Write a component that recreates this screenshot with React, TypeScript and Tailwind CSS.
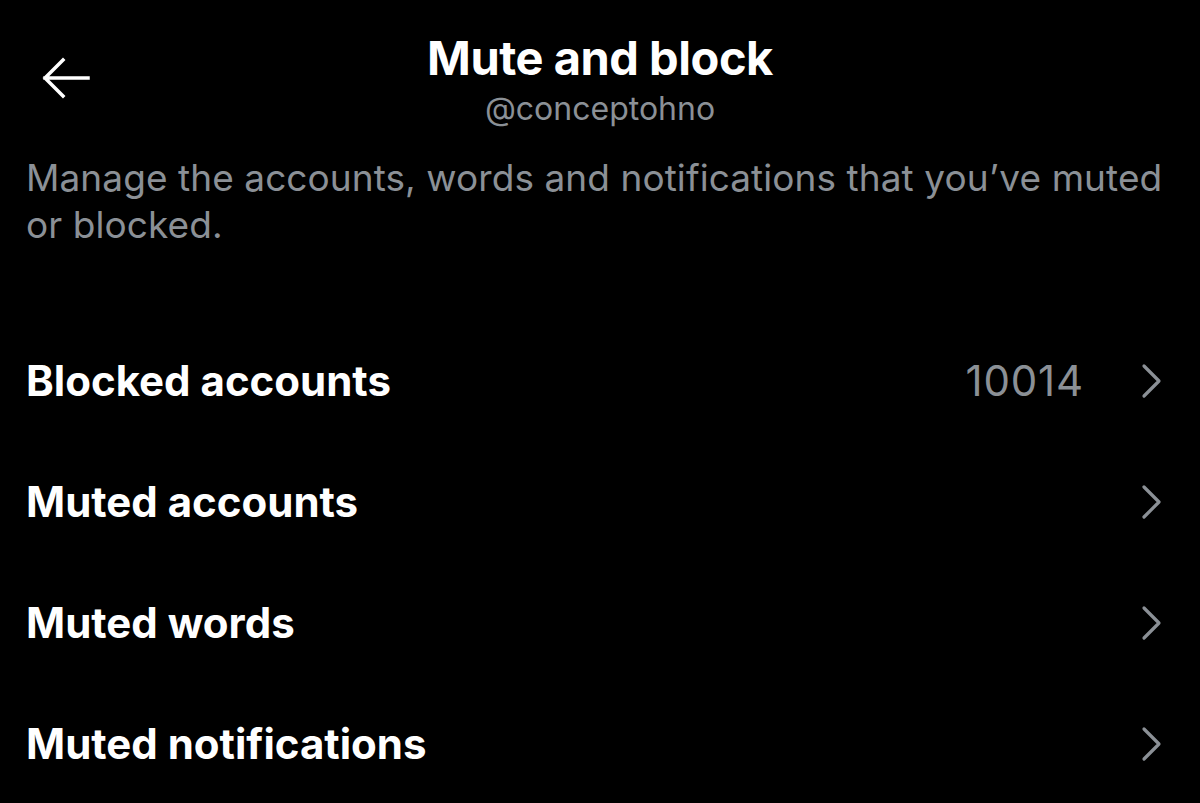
import { useState } from "react";

type Row = { label: string; count?: string };

const rows: Row[] = [
  { label: "Blocked accounts", count: "10014" },
  { label: "Muted accounts" },
  { label: "Muted words" },
  { label: "Muted notifications" },
];

function BackArrow() {
  return (
    <svg width="50" height="44" viewBox="0 0 50 44" fill="none">
      <path
        d="M47 22H4M22 4L4 22L22 40"
        stroke="white"
        strokeWidth="3.5"
        strokeLinecap="square"
        strokeLinejoin="miter"
      />
    </svg>
  );
}

function Chevron() {
  return (
    <svg width="22" height="36" viewBox="0 0 22 36" fill="none">
      <path d="M4 3L19 18L4 33" stroke="#8b9096" strokeWidth="3.2" strokeLinecap="round" strokeLinejoin="round" />
    </svg>
  );
}

export default function App() {
  const [pressed, setPressed] = useState<string | null>(null);

  return (
    <div
      className="h-[803px] w-[1200px] overflow-hidden bg-black text-white"
      style={{ fontFamily: "Inter, 'Noto Sans', sans-serif" }}
    >
      {/* Header */}
      <header className="grid grid-cols-[1fr_auto_1fr] items-start pt-[30px]">
        <button className="ml-[41px] mt-[26px] justify-self-start" aria-label="Back">
          <BackArrow />
        </button>
        <div className="flex flex-col items-center">
          <h1 className="text-[47px] font-bold leading-[56px] tracking-[-0.01em]">Mute and block</h1>
          <p className="mt-[4px] text-[32px] leading-[38px] text-[#8b9096]">@conceptohno</p>
        </div>
        <div />
      </header>

      {/* Description */}
      <p className="mt-[26px] pl-[26px] pr-[34px] text-[37px] leading-[47px] tracking-[0.002em] text-[#8b9096]">
        Manage the accounts, words and notifications that you’ve muted or blocked.
      </p>

      {/* Rows */}
      <ul className="mt-[72px]">
        {rows.map((r) => (
          <li key={r.label}>
            <button
              onMouseDown={() => setPressed(r.label)}
              onMouseUp={() => setPressed(null)}
              className={`flex h-[121px] w-full items-center justify-between pl-[26px] pr-[38px] text-left ${
                pressed === r.label ? "bg-white/5" : ""
              }`}
            >
              <span className="text-[42px] font-bold leading-none">{r.label}</span>
              <span className="flex items-center gap-[56px]">
                {r.count && (
                  <span className="text-[42px] leading-none tracking-[0.02em] text-[#8b9096]">{r.count}</span>
                )}
                <Chevron />
              </span>
            </button>
          </li>
        ))}
      </ul>
    </div>
  );
}
